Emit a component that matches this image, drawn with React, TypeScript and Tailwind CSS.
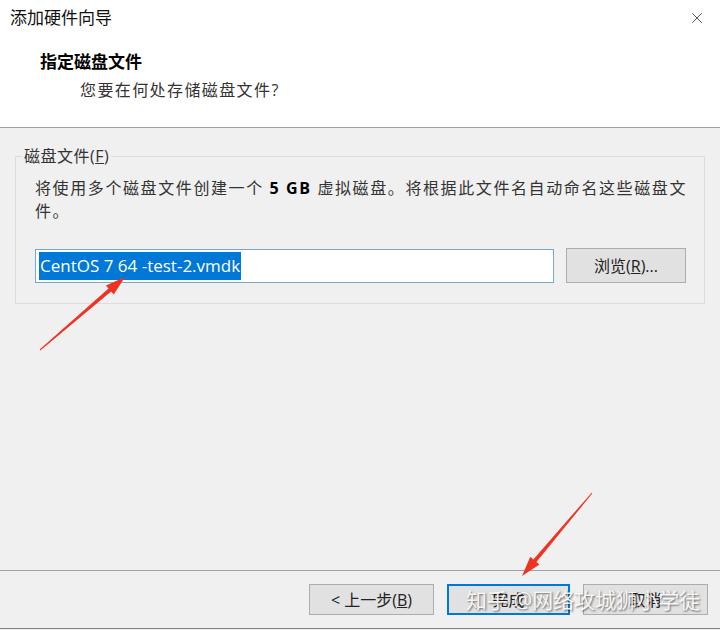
import React from 'react';
import { X } from 'lucide-react';

const cjk = "font-['Segoe_UI','Open_Sans','Noto_Sans_CJK_SC',sans-serif]";

// tapered red arrow from tail to tip, like the ones drawn on the screenshot
function arrowPoints(x1: number, y1: number, x2: number, y2: number) {
  const dx = x2 - x1;
  const dy = y2 - y1;
  const len = Math.hypot(dx, dy);
  const ux = dx / len;
  const uy = dy / len;
  const nx = -uy;
  const ny = ux;
  const headLen = 20;
  const headW = 6;
  const shaftW = 2;
  const bx = x2 - ux * headLen;
  const by = y2 - uy * headLen;
  const pts = [
    [x1 + nx * 0.5, y1 + ny * 0.5],
    [bx + nx * shaftW, by + ny * shaftW],
    [bx + nx * headW, by + ny * headW],
    [x2, y2],
    [bx - nx * headW, by - ny * headW],
    [bx - nx * shaftW, by - ny * shaftW],
    [x1 - nx * 0.5, y1 - ny * 0.5],
  ];
  return pts.map((p) => p.join(',')).join(' ');
}

const Button: React.FC<{ children: React.ReactNode; primary?: boolean; className?: string }> = ({
  children,
  primary,
  className = '',
}) => (
  <button
    className={`h-[31px] bg-[#e1e1e1] text-[16px] text-[#222] flex items-center justify-center ${
      primary ? 'border-2 border-[#0078d7]' : 'border border-[#adadad]'
    } ${className}`}
  >
    {children}
  </button>
);

export default function App() {
  return (
    <div className={`relative w-[720px] h-[630px] overflow-hidden bg-[#f0f0f0] flex flex-col ${cjk}`}>
      {/* Header */}
      <div className="h-[128px] shrink-0 bg-white border-b border-[#a0a0a0]">
        <div className="flex items-center justify-between pl-[10px] pr-[14px] pt-[7px]">
          <span className="text-[17px] leading-[22px] text-[#111]">添加硬件向导</span>
          <X className="h-[18px] w-[18px] text-[#444]" strokeWidth={1.2} />
        </div>
        <div className="pl-[40px] mt-[22px] text-[17px] leading-[22px] font-bold text-black">指定磁盘文件</div>
        <div className="pl-[80px] mt-[6px] text-[16px] leading-[22px] tracking-[1.4px] text-[#333]">
          您要在何处存储磁盘文件?
        </div>
      </div>

      {/* Body */}
      <div className="flex-1 px-[15px] pt-[18px]">
        <fieldset className="w-[690px] h-[158px] border border-[#dcdcdc] pl-[19px] pr-[4px]">
          <legend className="-ml-[13px] px-[2px] text-[16px] leading-[20px] text-[#333] tracking-[0.5px]">
            磁盘文件(<span className="underline">F</span>)
          </legend>
          <p className="mt-[11px] w-[664px] text-[16px] leading-[23px] tracking-[1.6px] text-[#333]">
            将使用多个磁盘文件创建一个 <span className="font-bold text-black">5 GB</span>{' '}
            虚拟磁盘。将根据此文件名自动命名这些磁盘文件。
          </p>
          <div className="mt-[25px] flex items-center">
            <div className="w-[519px] h-[34px] bg-white border border-[#7aa7c7] flex items-center pl-[3px]">
              <span className="bg-[#0078d7] text-white text-[17px] leading-[28px] px-[1px]">
                CentOS 7 64 -test-2.vmdk
              </span>
            </div>
            <Button className="ml-[12px] w-[120px] h-[35px]">
              浏览(<span className="underline">R</span>)...
            </Button>
          </div>
        </fieldset>
      </div>

      {/* Footer */}
      <div className="h-[59px] shrink-0 border-t border-b border-[#a0a0a0] border-b-[#808080] flex justify-end items-start pt-[13px] pr-[12px] gap-[13px]">
        <Button className="w-[125px]">
          &lt; 上一步(<span className="underline">B</span>)
        </Button>
        <Button primary className="w-[123px]">
          完成
        </Button>
        <Button className="w-[125px]">取消</Button>
      </div>
      <div className="h-px shrink-0" />

      {/* watermark */}
      <div className="absolute left-[466px] top-[586px] text-[21px] leading-[28px] text-white/90 [text-shadow:1px_1px_2px_rgba(0,0,0,0.55)] whitespace-nowrap">
        知乎 @网络攻城狮小学徒
      </div>

      {/* annotation arrows */}
      <svg className="absolute inset-0 pointer-events-none" width="720" height="630">
        <polygon points={arrowPoints(40, 350, 125, 277)} fill="#ee3324" />
        <polygon points={arrowPoints(592, 493, 522, 576)} fill="#ee3324" />
      </svg>
    </div>
  );
}
